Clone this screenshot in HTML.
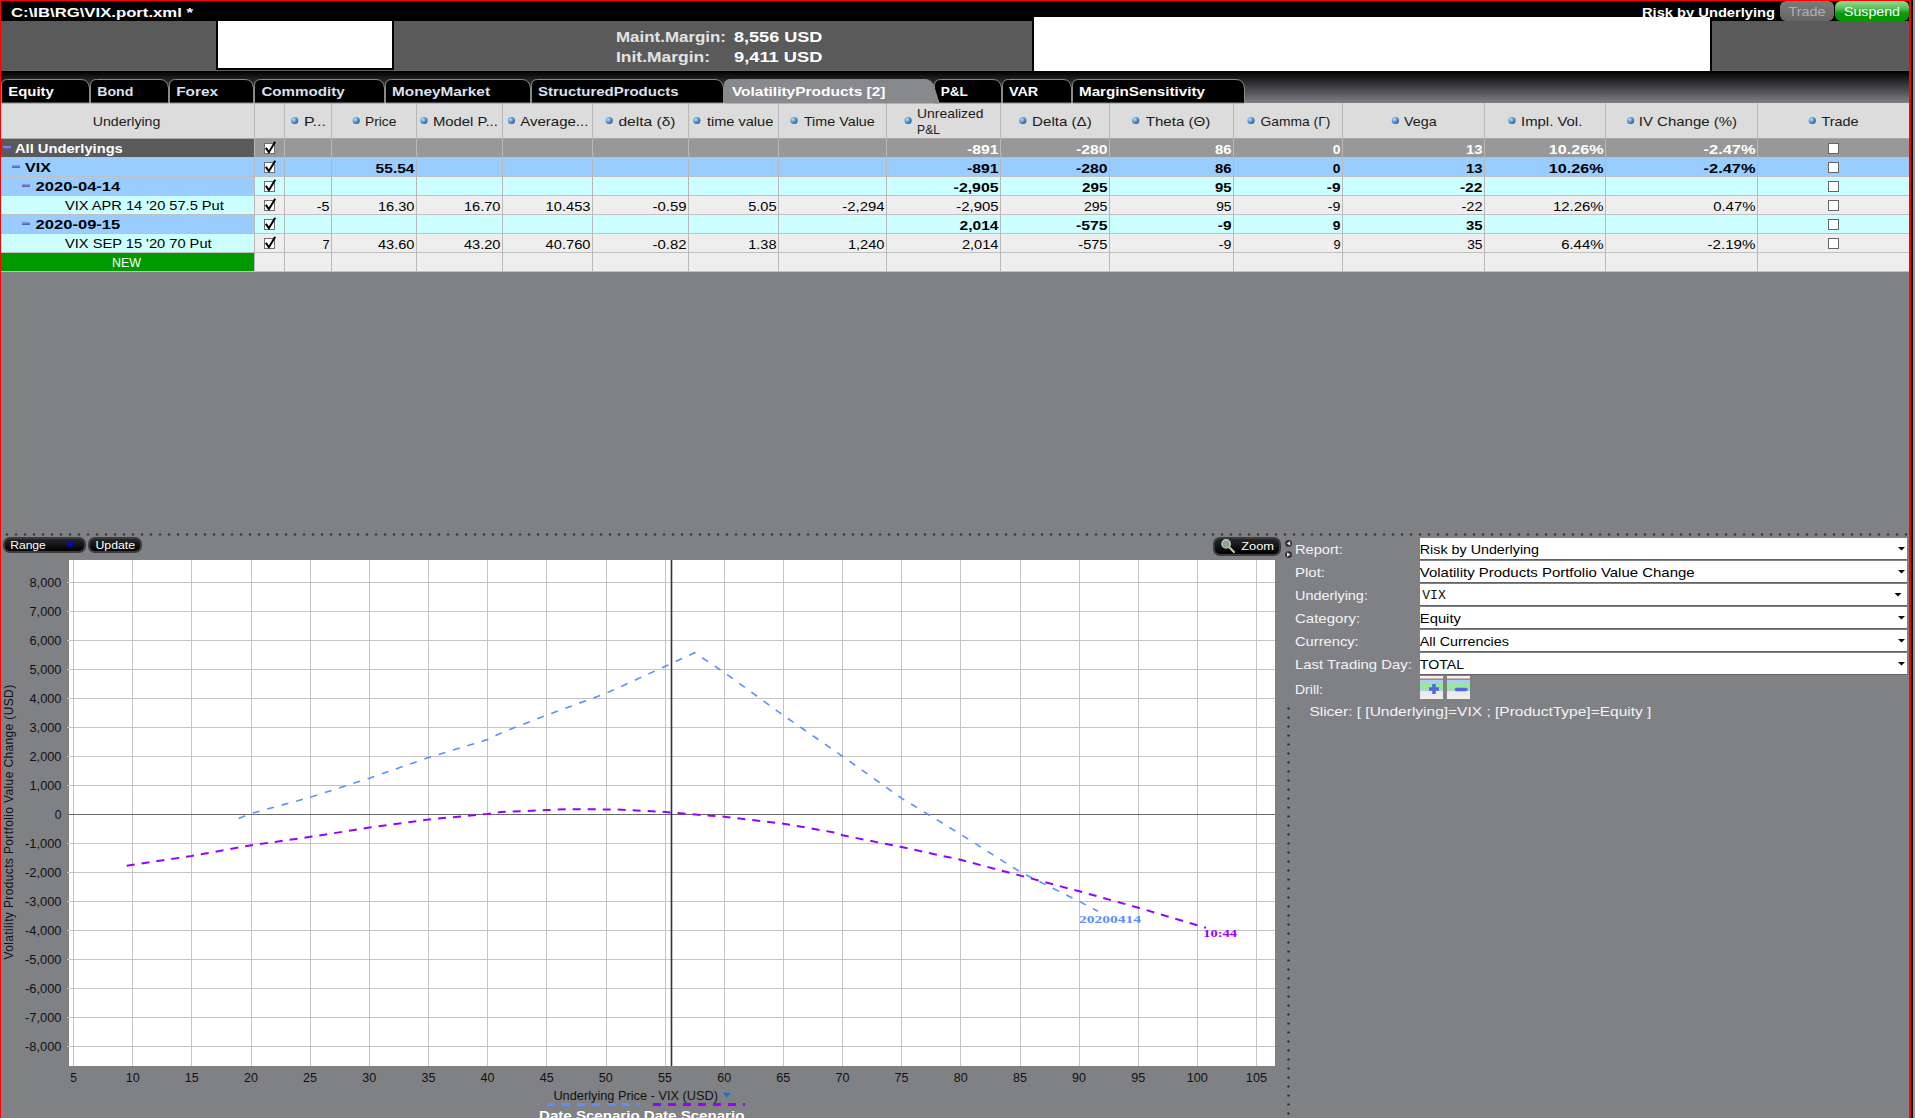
<!DOCTYPE html>
<html><head><meta charset="utf-8"><style>*{margin:0;padding:0;box-sizing:border-box}
html,body{width:1915px;height:1118px;overflow:hidden;background:#808185;font-family:"Liberation Sans",sans-serif}
.a{position:absolute}
svg{position:absolute;left:0;top:0}
</style></head><body>
<div class="a" style="left:0px;top:0px;width:1915px;height:1118px;background:#808185"></div>
<div class="a" style="left:0px;top:0px;width:1915px;height:21px;background:#000"></div>
<div class="a" style="left:0px;top:21px;width:1915px;height:50px;background:#5a5a5a"></div>
<div class="a" style="left:0px;top:70px;width:1915px;height:1px;background:#636363"></div>
<div class="a" style="left:216px;top:21px;width:178px;height:49px;background:#000"></div>
<div class="a" style="left:218px;top:21px;width:174px;height:47px;background:#fff"></div>
<div class="a" style="left:1034px;top:17px;width:676px;height:54px;background:#fff"></div>
<div class="a" style="left:1780px;top:1px;width:54px;height:20px;border-radius:6px;background:linear-gradient(#7a7a7a,#666);"></div>
<div class="a" style="left:1835px;top:1px;width:74px;height:20px;border-radius:6px;background:linear-gradient(#90e090 0%,#5cc05c 35%,#0a9a0a 62%,#009900 100%);"></div>
<div class="a" style="left:0px;top:71px;width:1915px;height:32px;background:linear-gradient(#000 0px,#7e7f83 32px)"></div>
<div class="a" style="left:1032px;top:21px;width:2px;height:50px;background:#000"></div>
<div class="a" style="left:1710px;top:21px;width:2px;height:50px;background:#000"></div>
<div class="a" style="left:1034px;top:17px;width:676px;height:54px;background:#fff"></div>
<div class="a" style="left:1px;top:103px;width:1908px;height:36px;background:#dcdcdc"></div>
<div class="a" style="left:1px;top:138px;width:1908px;height:1px;background:#a8a8a8"></div>
<div class="a" style="left:1px;top:139px;width:253px;height:18px;background:#5a5a5a"></div>
<div class="a" style="left:255px;top:139px;width:1654px;height:18px;background:#989898"></div>
<div class="a" style="left:1px;top:157px;width:1908px;height:1px;background:#c0c0c0"></div>
<div class="a" style="left:3px;top:146px;width:8px;height:3px;background:linear-gradient(#9898ec,#5656c0)"></div>
<div class="a" style="left:1px;top:158px;width:253px;height:18px;background:#99ccff"></div>
<div class="a" style="left:255px;top:158px;width:1654px;height:18px;background:#99ccff"></div>
<div class="a" style="left:1px;top:176px;width:1908px;height:1px;background:#c0c0c0"></div>
<div class="a" style="left:12px;top:165px;width:8px;height:3px;background:linear-gradient(#9898ec,#5656c0)"></div>
<div class="a" style="left:1px;top:177px;width:253px;height:18px;background:#99ccff"></div>
<div class="a" style="left:255px;top:177px;width:1654px;height:18px;background:#ccffff"></div>
<div class="a" style="left:1px;top:195px;width:1908px;height:1px;background:#c0c0c0"></div>
<div class="a" style="left:22px;top:184px;width:8px;height:3px;background:linear-gradient(#9898ec,#5656c0)"></div>
<div class="a" style="left:1px;top:196px;width:253px;height:18px;background:#ccffff"></div>
<div class="a" style="left:255px;top:196px;width:1654px;height:18px;background:#eeeeee"></div>
<div class="a" style="left:1px;top:214px;width:1908px;height:1px;background:#c0c0c0"></div>
<div class="a" style="left:1px;top:215px;width:253px;height:18px;background:#99ccff"></div>
<div class="a" style="left:255px;top:215px;width:1654px;height:18px;background:#ccffff"></div>
<div class="a" style="left:1px;top:233px;width:1908px;height:1px;background:#c0c0c0"></div>
<div class="a" style="left:22px;top:222px;width:8px;height:3px;background:linear-gradient(#9898ec,#5656c0)"></div>
<div class="a" style="left:1px;top:234px;width:253px;height:18px;background:#ccffff"></div>
<div class="a" style="left:255px;top:234px;width:1654px;height:18px;background:#eeeeee"></div>
<div class="a" style="left:1px;top:252px;width:1908px;height:1px;background:#c0c0c0"></div>
<div class="a" style="left:1px;top:253px;width:253px;height:18px;background:#009900"></div>
<div class="a" style="left:255px;top:253px;width:1654px;height:18px;background:#eeeeee"></div>
<div class="a" style="left:1px;top:271px;width:1908px;height:1px;background:#c0c0c0"></div>
<div class="a" style="left:254px;top:103px;width:1px;height:169px;background:#b8b8b8"></div>
<div class="a" style="left:284px;top:103px;width:1px;height:169px;background:#b8b8b8"></div>
<div class="a" style="left:331px;top:103px;width:1px;height:169px;background:#b8b8b8"></div>
<div class="a" style="left:416px;top:103px;width:1px;height:169px;background:#b8b8b8"></div>
<div class="a" style="left:502px;top:103px;width:1px;height:169px;background:#b8b8b8"></div>
<div class="a" style="left:592px;top:103px;width:1px;height:169px;background:#b8b8b8"></div>
<div class="a" style="left:688px;top:103px;width:1px;height:169px;background:#b8b8b8"></div>
<div class="a" style="left:778px;top:103px;width:1px;height:169px;background:#b8b8b8"></div>
<div class="a" style="left:886px;top:103px;width:1px;height:169px;background:#b8b8b8"></div>
<div class="a" style="left:1000px;top:103px;width:1px;height:169px;background:#b8b8b8"></div>
<div class="a" style="left:1109px;top:103px;width:1px;height:169px;background:#b8b8b8"></div>
<div class="a" style="left:1233px;top:103px;width:1px;height:169px;background:#b8b8b8"></div>
<div class="a" style="left:1342px;top:103px;width:1px;height:169px;background:#b8b8b8"></div>
<div class="a" style="left:1484px;top:103px;width:1px;height:169px;background:#b8b8b8"></div>
<div class="a" style="left:1605px;top:103px;width:1px;height:169px;background:#b8b8b8"></div>
<div class="a" style="left:1757px;top:103px;width:1px;height:169px;background:#b8b8b8"></div>
<div class="a" style="left:1px;top:271px;width:1908px;height:1px;background:#c0c0c0"></div>
<div class="a" style="left:3px;top:537px;width:83px;height:16px;border-radius:7px;background:linear-gradient(#262626,#000);border:2px solid #3c3c3c"></div>
<div class="a" style="left:88px;top:537px;width:54px;height:16px;border-radius:7px;background:linear-gradient(#262626,#000);border:2px solid #3c3c3c"></div>
<div class="a" style="left:1213px;top:537px;width:68px;height:19px;border-radius:7px;background:linear-gradient(#262626,#000);border:2px solid #3c3c3c"></div>
<div class="a" style="left:1420px;top:538px;width:487px;height:21px;background:#fff"></div>
<div class="a" style="left:1420px;top:559px;width:487px;height:1px;background:#636363"></div>
<div class="a" style="left:1420px;top:561px;width:487px;height:21px;background:#fff"></div>
<div class="a" style="left:1420px;top:582px;width:487px;height:1px;background:#636363"></div>
<div class="a" style="left:1420px;top:584px;width:487px;height:21px;background:#fff"></div>
<div class="a" style="left:1420px;top:605px;width:487px;height:1px;background:#636363"></div>
<div class="a" style="left:1420px;top:607px;width:487px;height:21px;background:#fff"></div>
<div class="a" style="left:1420px;top:628px;width:487px;height:1px;background:#636363"></div>
<div class="a" style="left:1420px;top:630px;width:487px;height:21px;background:#fff"></div>
<div class="a" style="left:1420px;top:651px;width:487px;height:1px;background:#636363"></div>
<div class="a" style="left:1420px;top:653px;width:487px;height:21px;background:#fff"></div>
<div class="a" style="left:1420px;top:674px;width:487px;height:1px;background:#636363"></div>
<div class="a" style="left:1420px;top:676px;width:23px;height:23px;background:linear-gradient(#f4f0f0 0px,#f4f0f0 2px,#d8b0b0 2px,#d8b0b0 3px,#8090a0 3px,#8090a0 4px,#a8d0ee 4px,#a8d0ee 7px,#98e898 7px,#98e898 13px,#b0d0ea 13px,#b0d0ea 15px,#e8e8e8 15px,#f0f0f0 100%)"></div>
<div class="a" style="left:1447px;top:676px;width:23px;height:23px;background:linear-gradient(#f4f0f0 0px,#f4f0f0 2px,#d8b0b0 2px,#d8b0b0 3px,#8090a0 3px,#8090a0 4px,#a8d0ee 4px,#a8d0ee 7px,#98e898 7px,#98e898 13px,#b0d0ea 13px,#b0d0ea 15px,#e8e8e8 15px,#f0f0f0 100%)"></div>
<svg width="1915" height="1118"><defs><radialGradient id="bul" cx="0.35" cy="0.35" r="0.7"><stop offset="0" stop-color="#bfe0ff"/><stop offset="0.5" stop-color="#5a9ad8"/><stop offset="1" stop-color="#2a5a90"/></radialGradient></defs><path d="M1.5,103 L1.5,85.5 Q1.5,79.5 7.5,79.5 L81,79.5 Q88.5,79.5 89.5,88 L89.5,103 Z" fill="#000" stroke="#8a8a8a" stroke-width="1"/><path d="M90.5,103 L90.5,85.5 Q90.5,79.5 96.5,79.5 L160,79.5 Q167.5,79.5 168.5,88 L168.5,103 Z" fill="#000" stroke="#8a8a8a" stroke-width="1"/><path d="M169.5,103 L169.5,85.5 Q169.5,79.5 175.5,79.5 L245,79.5 Q252.5,79.5 253.5,88 L253.5,103 Z" fill="#000" stroke="#8a8a8a" stroke-width="1"/><path d="M254.5,103 L254.5,85.5 Q254.5,79.5 260.5,79.5 L376,79.5 Q383.5,79.5 384.5,88 L384.5,103 Z" fill="#000" stroke="#8a8a8a" stroke-width="1"/><path d="M385.5,103 L385.5,85.5 Q385.5,79.5 391.5,79.5 L522,79.5 Q529.5,79.5 530.5,88 L530.5,103 Z" fill="#000" stroke="#8a8a8a" stroke-width="1"/><path d="M531.5,103 L531.5,85.5 Q531.5,79.5 537.5,79.5 L715,79.5 Q722.5,79.5 723.5,88 L723.5,103 Z" fill="#000" stroke="#8a8a8a" stroke-width="1"/><path d="M934.5,103 L934.5,85.5 Q934.5,79.5 940.5,79.5 L993,79.5 Q1000.5,79.5 1001.5,88 L1001.5,103 Z" fill="#000" stroke="#8a8a8a" stroke-width="1"/><path d="M1002.5,103 L1002.5,85.5 Q1002.5,79.5 1008.5,79.5 L1063,79.5 Q1070.5,79.5 1071.5,88 L1071.5,103 Z" fill="#000" stroke="#8a8a8a" stroke-width="1"/><path d="M1072.5,103 L1072.5,85.5 Q1072.5,79.5 1078.5,79.5 L1236,79.5 Q1243.5,79.5 1244.5,88 L1244.5,103 Z" fill="#000" stroke="#8a8a8a" stroke-width="1"/><path d="M724.5,103 L724.5,85 Q724.5,79.5 730,79.5 L925,79.5 Q932,79.5 934,87 L939,103 Z" fill="#88898d" stroke="#8a8a8a" stroke-width="1"/><circle cx="294.7" cy="120.5" r="3.6" fill="url(#bul)"/><circle cx="356.2" cy="120.5" r="3.6" fill="url(#bul)"/><circle cx="424.0" cy="120.5" r="3.6" fill="url(#bul)"/><circle cx="511.40000000000003" cy="120.5" r="3.6" fill="url(#bul)"/><circle cx="609.1999999999999" cy="120.5" r="3.6" fill="url(#bul)"/><circle cx="696.8" cy="120.5" r="3.6" fill="url(#bul)"/><circle cx="794.0999999999999" cy="120.5" r="3.6" fill="url(#bul)"/><circle cx="908.0999999999999" cy="120.5" r="3.6" fill="url(#bul)"/><circle cx="1022.8" cy="120.5" r="3.6" fill="url(#bul)"/><circle cx="1135.7" cy="120.5" r="3.6" fill="url(#bul)"/><circle cx="1251.0" cy="120.5" r="3.6" fill="url(#bul)"/><circle cx="1395.3999999999999" cy="120.5" r="3.6" fill="url(#bul)"/><circle cx="1512.0" cy="120.5" r="3.6" fill="url(#bul)"/><circle cx="1630.6" cy="120.5" r="3.6" fill="url(#bul)"/><circle cx="1812.3" cy="120.5" r="3.6" fill="url(#bul)"/><rect x="264.5" y="143.5" width="10" height="10" fill="#fff" stroke="#707070" stroke-width="1"/><path d="M265.8,147.8 L268.9,152.2 L275.2,141.8" fill="none" stroke="#000" stroke-width="2"/><rect x="1828.5" y="143.5" width="10" height="10" fill="#fff" stroke="#666" stroke-width="1"/><rect x="264.5" y="162.5" width="10" height="10" fill="#fff" stroke="#707070" stroke-width="1"/><path d="M265.8,166.8 L268.9,171.2 L275.2,160.8" fill="none" stroke="#000" stroke-width="2"/><rect x="1828.5" y="162.5" width="10" height="10" fill="#fff" stroke="#666" stroke-width="1"/><rect x="264.5" y="181.5" width="10" height="10" fill="#fff" stroke="#707070" stroke-width="1"/><path d="M265.8,185.8 L268.9,190.2 L275.2,179.8" fill="none" stroke="#000" stroke-width="2"/><rect x="1828.5" y="181.5" width="10" height="10" fill="#fff" stroke="#666" stroke-width="1"/><rect x="264.5" y="200.5" width="10" height="10" fill="#fff" stroke="#707070" stroke-width="1"/><path d="M265.8,204.8 L268.9,209.2 L275.2,198.8" fill="none" stroke="#000" stroke-width="2"/><rect x="1828.5" y="200.5" width="10" height="10" fill="#fff" stroke="#666" stroke-width="1"/><rect x="264.5" y="219.5" width="10" height="10" fill="#fff" stroke="#707070" stroke-width="1"/><path d="M265.8,223.8 L268.9,228.2 L275.2,217.8" fill="none" stroke="#000" stroke-width="2"/><rect x="1828.5" y="219.5" width="10" height="10" fill="#fff" stroke="#666" stroke-width="1"/><rect x="264.5" y="238.5" width="10" height="10" fill="#fff" stroke="#707070" stroke-width="1"/><path d="M265.8,242.8 L268.9,247.2 L275.2,236.8" fill="none" stroke="#000" stroke-width="2"/><rect x="1828.5" y="238.5" width="10" height="10" fill="#fff" stroke="#666" stroke-width="1"/><circle cx="7" cy="534.5" r="1.25" fill="#3a3a3a"/><circle cx="16" cy="534.5" r="1.25" fill="#3a3a3a"/><circle cx="25" cy="534.5" r="1.25" fill="#3a3a3a"/><circle cx="34" cy="534.5" r="1.25" fill="#3a3a3a"/><circle cx="43" cy="534.5" r="1.25" fill="#3a3a3a"/><circle cx="52" cy="534.5" r="1.25" fill="#3a3a3a"/><circle cx="61" cy="534.5" r="1.25" fill="#3a3a3a"/><circle cx="70" cy="534.5" r="1.25" fill="#3a3a3a"/><circle cx="79" cy="534.5" r="1.25" fill="#3a3a3a"/><circle cx="88" cy="534.5" r="1.25" fill="#3a3a3a"/><circle cx="97" cy="534.5" r="1.25" fill="#3a3a3a"/><circle cx="106" cy="534.5" r="1.25" fill="#3a3a3a"/><circle cx="115" cy="534.5" r="1.25" fill="#3a3a3a"/><circle cx="124" cy="534.5" r="1.25" fill="#3a3a3a"/><circle cx="133" cy="534.5" r="1.25" fill="#3a3a3a"/><circle cx="142" cy="534.5" r="1.25" fill="#3a3a3a"/><circle cx="151" cy="534.5" r="1.25" fill="#3a3a3a"/><circle cx="160" cy="534.5" r="1.25" fill="#3a3a3a"/><circle cx="169" cy="534.5" r="1.25" fill="#3a3a3a"/><circle cx="178" cy="534.5" r="1.25" fill="#3a3a3a"/><circle cx="187" cy="534.5" r="1.25" fill="#3a3a3a"/><circle cx="196" cy="534.5" r="1.25" fill="#3a3a3a"/><circle cx="205" cy="534.5" r="1.25" fill="#3a3a3a"/><circle cx="214" cy="534.5" r="1.25" fill="#3a3a3a"/><circle cx="223" cy="534.5" r="1.25" fill="#3a3a3a"/><circle cx="232" cy="534.5" r="1.25" fill="#3a3a3a"/><circle cx="241" cy="534.5" r="1.25" fill="#3a3a3a"/><circle cx="250" cy="534.5" r="1.25" fill="#3a3a3a"/><circle cx="259" cy="534.5" r="1.25" fill="#3a3a3a"/><circle cx="268" cy="534.5" r="1.25" fill="#3a3a3a"/><circle cx="277" cy="534.5" r="1.25" fill="#3a3a3a"/><circle cx="286" cy="534.5" r="1.25" fill="#3a3a3a"/><circle cx="295" cy="534.5" r="1.25" fill="#3a3a3a"/><circle cx="304" cy="534.5" r="1.25" fill="#3a3a3a"/><circle cx="313" cy="534.5" r="1.25" fill="#3a3a3a"/><circle cx="322" cy="534.5" r="1.25" fill="#3a3a3a"/><circle cx="331" cy="534.5" r="1.25" fill="#3a3a3a"/><circle cx="340" cy="534.5" r="1.25" fill="#3a3a3a"/><circle cx="349" cy="534.5" r="1.25" fill="#3a3a3a"/><circle cx="358" cy="534.5" r="1.25" fill="#3a3a3a"/><circle cx="367" cy="534.5" r="1.25" fill="#3a3a3a"/><circle cx="376" cy="534.5" r="1.25" fill="#3a3a3a"/><circle cx="385" cy="534.5" r="1.25" fill="#3a3a3a"/><circle cx="394" cy="534.5" r="1.25" fill="#3a3a3a"/><circle cx="403" cy="534.5" r="1.25" fill="#3a3a3a"/><circle cx="412" cy="534.5" r="1.25" fill="#3a3a3a"/><circle cx="421" cy="534.5" r="1.25" fill="#3a3a3a"/><circle cx="430" cy="534.5" r="1.25" fill="#3a3a3a"/><circle cx="439" cy="534.5" r="1.25" fill="#3a3a3a"/><circle cx="448" cy="534.5" r="1.25" fill="#3a3a3a"/><circle cx="457" cy="534.5" r="1.25" fill="#3a3a3a"/><circle cx="466" cy="534.5" r="1.25" fill="#3a3a3a"/><circle cx="475" cy="534.5" r="1.25" fill="#3a3a3a"/><circle cx="484" cy="534.5" r="1.25" fill="#3a3a3a"/><circle cx="493" cy="534.5" r="1.25" fill="#3a3a3a"/><circle cx="502" cy="534.5" r="1.25" fill="#3a3a3a"/><circle cx="511" cy="534.5" r="1.25" fill="#3a3a3a"/><circle cx="520" cy="534.5" r="1.25" fill="#3a3a3a"/><circle cx="529" cy="534.5" r="1.25" fill="#3a3a3a"/><circle cx="538" cy="534.5" r="1.25" fill="#3a3a3a"/><circle cx="547" cy="534.5" r="1.25" fill="#3a3a3a"/><circle cx="556" cy="534.5" r="1.25" fill="#3a3a3a"/><circle cx="565" cy="534.5" r="1.25" fill="#3a3a3a"/><circle cx="574" cy="534.5" r="1.25" fill="#3a3a3a"/><circle cx="583" cy="534.5" r="1.25" fill="#3a3a3a"/><circle cx="592" cy="534.5" r="1.25" fill="#3a3a3a"/><circle cx="601" cy="534.5" r="1.25" fill="#3a3a3a"/><circle cx="610" cy="534.5" r="1.25" fill="#3a3a3a"/><circle cx="619" cy="534.5" r="1.25" fill="#3a3a3a"/><circle cx="628" cy="534.5" r="1.25" fill="#3a3a3a"/><circle cx="637" cy="534.5" r="1.25" fill="#3a3a3a"/><circle cx="646" cy="534.5" r="1.25" fill="#3a3a3a"/><circle cx="655" cy="534.5" r="1.25" fill="#3a3a3a"/><circle cx="664" cy="534.5" r="1.25" fill="#3a3a3a"/><circle cx="673" cy="534.5" r="1.25" fill="#3a3a3a"/><circle cx="682" cy="534.5" r="1.25" fill="#3a3a3a"/><circle cx="691" cy="534.5" r="1.25" fill="#3a3a3a"/><circle cx="700" cy="534.5" r="1.25" fill="#3a3a3a"/><circle cx="709" cy="534.5" r="1.25" fill="#3a3a3a"/><circle cx="718" cy="534.5" r="1.25" fill="#3a3a3a"/><circle cx="727" cy="534.5" r="1.25" fill="#3a3a3a"/><circle cx="736" cy="534.5" r="1.25" fill="#3a3a3a"/><circle cx="745" cy="534.5" r="1.25" fill="#3a3a3a"/><circle cx="754" cy="534.5" r="1.25" fill="#3a3a3a"/><circle cx="763" cy="534.5" r="1.25" fill="#3a3a3a"/><circle cx="772" cy="534.5" r="1.25" fill="#3a3a3a"/><circle cx="781" cy="534.5" r="1.25" fill="#3a3a3a"/><circle cx="790" cy="534.5" r="1.25" fill="#3a3a3a"/><circle cx="799" cy="534.5" r="1.25" fill="#3a3a3a"/><circle cx="808" cy="534.5" r="1.25" fill="#3a3a3a"/><circle cx="817" cy="534.5" r="1.25" fill="#3a3a3a"/><circle cx="826" cy="534.5" r="1.25" fill="#3a3a3a"/><circle cx="835" cy="534.5" r="1.25" fill="#3a3a3a"/><circle cx="844" cy="534.5" r="1.25" fill="#3a3a3a"/><circle cx="853" cy="534.5" r="1.25" fill="#3a3a3a"/><circle cx="862" cy="534.5" r="1.25" fill="#3a3a3a"/><circle cx="871" cy="534.5" r="1.25" fill="#3a3a3a"/><circle cx="880" cy="534.5" r="1.25" fill="#3a3a3a"/><circle cx="889" cy="534.5" r="1.25" fill="#3a3a3a"/><circle cx="898" cy="534.5" r="1.25" fill="#3a3a3a"/><circle cx="907" cy="534.5" r="1.25" fill="#3a3a3a"/><circle cx="916" cy="534.5" r="1.25" fill="#3a3a3a"/><circle cx="925" cy="534.5" r="1.25" fill="#3a3a3a"/><circle cx="934" cy="534.5" r="1.25" fill="#3a3a3a"/><circle cx="943" cy="534.5" r="1.25" fill="#3a3a3a"/><circle cx="952" cy="534.5" r="1.25" fill="#3a3a3a"/><circle cx="961" cy="534.5" r="1.25" fill="#3a3a3a"/><circle cx="970" cy="534.5" r="1.25" fill="#3a3a3a"/><circle cx="979" cy="534.5" r="1.25" fill="#3a3a3a"/><circle cx="988" cy="534.5" r="1.25" fill="#3a3a3a"/><circle cx="997" cy="534.5" r="1.25" fill="#3a3a3a"/><circle cx="1006" cy="534.5" r="1.25" fill="#3a3a3a"/><circle cx="1015" cy="534.5" r="1.25" fill="#3a3a3a"/><circle cx="1024" cy="534.5" r="1.25" fill="#3a3a3a"/><circle cx="1033" cy="534.5" r="1.25" fill="#3a3a3a"/><circle cx="1042" cy="534.5" r="1.25" fill="#3a3a3a"/><circle cx="1051" cy="534.5" r="1.25" fill="#3a3a3a"/><circle cx="1060" cy="534.5" r="1.25" fill="#3a3a3a"/><circle cx="1069" cy="534.5" r="1.25" fill="#3a3a3a"/><circle cx="1078" cy="534.5" r="1.25" fill="#3a3a3a"/><circle cx="1087" cy="534.5" r="1.25" fill="#3a3a3a"/><circle cx="1096" cy="534.5" r="1.25" fill="#3a3a3a"/><circle cx="1105" cy="534.5" r="1.25" fill="#3a3a3a"/><circle cx="1114" cy="534.5" r="1.25" fill="#3a3a3a"/><circle cx="1123" cy="534.5" r="1.25" fill="#3a3a3a"/><circle cx="1132" cy="534.5" r="1.25" fill="#3a3a3a"/><circle cx="1141" cy="534.5" r="1.25" fill="#3a3a3a"/><circle cx="1150" cy="534.5" r="1.25" fill="#3a3a3a"/><circle cx="1159" cy="534.5" r="1.25" fill="#3a3a3a"/><circle cx="1168" cy="534.5" r="1.25" fill="#3a3a3a"/><circle cx="1177" cy="534.5" r="1.25" fill="#3a3a3a"/><circle cx="1186" cy="534.5" r="1.25" fill="#3a3a3a"/><circle cx="1195" cy="534.5" r="1.25" fill="#3a3a3a"/><circle cx="1204" cy="534.5" r="1.25" fill="#3a3a3a"/><circle cx="1213" cy="534.5" r="1.25" fill="#3a3a3a"/><circle cx="1222" cy="534.5" r="1.25" fill="#3a3a3a"/><circle cx="1231" cy="534.5" r="1.25" fill="#3a3a3a"/><circle cx="1240" cy="534.5" r="1.25" fill="#3a3a3a"/><circle cx="1249" cy="534.5" r="1.25" fill="#3a3a3a"/><circle cx="1258" cy="534.5" r="1.25" fill="#3a3a3a"/><circle cx="1267" cy="534.5" r="1.25" fill="#3a3a3a"/><circle cx="1276" cy="534.5" r="1.25" fill="#3a3a3a"/><circle cx="1285" cy="534.5" r="1.25" fill="#3a3a3a"/><circle cx="1294" cy="534.5" r="1.25" fill="#3a3a3a"/><circle cx="1303" cy="534.5" r="1.25" fill="#3a3a3a"/><circle cx="1312" cy="534.5" r="1.25" fill="#3a3a3a"/><circle cx="1321" cy="534.5" r="1.25" fill="#3a3a3a"/><circle cx="1330" cy="534.5" r="1.25" fill="#3a3a3a"/><circle cx="1339" cy="534.5" r="1.25" fill="#3a3a3a"/><circle cx="1348" cy="534.5" r="1.25" fill="#3a3a3a"/><circle cx="1357" cy="534.5" r="1.25" fill="#3a3a3a"/><circle cx="1366" cy="534.5" r="1.25" fill="#3a3a3a"/><circle cx="1375" cy="534.5" r="1.25" fill="#3a3a3a"/><circle cx="1384" cy="534.5" r="1.25" fill="#3a3a3a"/><circle cx="1393" cy="534.5" r="1.25" fill="#3a3a3a"/><circle cx="1402" cy="534.5" r="1.25" fill="#3a3a3a"/><circle cx="1411" cy="534.5" r="1.25" fill="#3a3a3a"/><circle cx="1420" cy="534.5" r="1.25" fill="#3a3a3a"/><circle cx="1429" cy="534.5" r="1.25" fill="#3a3a3a"/><circle cx="1438" cy="534.5" r="1.25" fill="#3a3a3a"/><circle cx="1447" cy="534.5" r="1.25" fill="#3a3a3a"/><circle cx="1456" cy="534.5" r="1.25" fill="#3a3a3a"/><circle cx="1465" cy="534.5" r="1.25" fill="#3a3a3a"/><circle cx="1474" cy="534.5" r="1.25" fill="#3a3a3a"/><circle cx="1483" cy="534.5" r="1.25" fill="#3a3a3a"/><circle cx="1492" cy="534.5" r="1.25" fill="#3a3a3a"/><circle cx="1501" cy="534.5" r="1.25" fill="#3a3a3a"/><circle cx="1510" cy="534.5" r="1.25" fill="#3a3a3a"/><circle cx="1519" cy="534.5" r="1.25" fill="#3a3a3a"/><circle cx="1528" cy="534.5" r="1.25" fill="#3a3a3a"/><circle cx="1537" cy="534.5" r="1.25" fill="#3a3a3a"/><circle cx="1546" cy="534.5" r="1.25" fill="#3a3a3a"/><circle cx="1555" cy="534.5" r="1.25" fill="#3a3a3a"/><circle cx="1564" cy="534.5" r="1.25" fill="#3a3a3a"/><circle cx="1573" cy="534.5" r="1.25" fill="#3a3a3a"/><circle cx="1582" cy="534.5" r="1.25" fill="#3a3a3a"/><circle cx="1591" cy="534.5" r="1.25" fill="#3a3a3a"/><circle cx="1600" cy="534.5" r="1.25" fill="#3a3a3a"/><circle cx="1609" cy="534.5" r="1.25" fill="#3a3a3a"/><circle cx="1618" cy="534.5" r="1.25" fill="#3a3a3a"/><circle cx="1627" cy="534.5" r="1.25" fill="#3a3a3a"/><circle cx="1636" cy="534.5" r="1.25" fill="#3a3a3a"/><circle cx="1645" cy="534.5" r="1.25" fill="#3a3a3a"/><circle cx="1654" cy="534.5" r="1.25" fill="#3a3a3a"/><circle cx="1663" cy="534.5" r="1.25" fill="#3a3a3a"/><circle cx="1672" cy="534.5" r="1.25" fill="#3a3a3a"/><circle cx="1681" cy="534.5" r="1.25" fill="#3a3a3a"/><circle cx="1690" cy="534.5" r="1.25" fill="#3a3a3a"/><circle cx="1699" cy="534.5" r="1.25" fill="#3a3a3a"/><circle cx="1708" cy="534.5" r="1.25" fill="#3a3a3a"/><circle cx="1717" cy="534.5" r="1.25" fill="#3a3a3a"/><circle cx="1726" cy="534.5" r="1.25" fill="#3a3a3a"/><circle cx="1735" cy="534.5" r="1.25" fill="#3a3a3a"/><circle cx="1744" cy="534.5" r="1.25" fill="#3a3a3a"/><circle cx="1753" cy="534.5" r="1.25" fill="#3a3a3a"/><circle cx="1762" cy="534.5" r="1.25" fill="#3a3a3a"/><circle cx="1771" cy="534.5" r="1.25" fill="#3a3a3a"/><circle cx="1780" cy="534.5" r="1.25" fill="#3a3a3a"/><circle cx="1789" cy="534.5" r="1.25" fill="#3a3a3a"/><circle cx="1798" cy="534.5" r="1.25" fill="#3a3a3a"/><circle cx="1807" cy="534.5" r="1.25" fill="#3a3a3a"/><circle cx="1816" cy="534.5" r="1.25" fill="#3a3a3a"/><circle cx="1825" cy="534.5" r="1.25" fill="#3a3a3a"/><circle cx="1834" cy="534.5" r="1.25" fill="#3a3a3a"/><circle cx="1843" cy="534.5" r="1.25" fill="#3a3a3a"/><circle cx="1852" cy="534.5" r="1.25" fill="#3a3a3a"/><circle cx="1861" cy="534.5" r="1.25" fill="#3a3a3a"/><circle cx="1870" cy="534.5" r="1.25" fill="#3a3a3a"/><circle cx="1879" cy="534.5" r="1.25" fill="#3a3a3a"/><circle cx="1888" cy="534.5" r="1.25" fill="#3a3a3a"/><circle cx="1897" cy="534.5" r="1.25" fill="#3a3a3a"/><circle cx="1906" cy="534.5" r="1.25" fill="#3a3a3a"/><path d="M66.6,542.2 L74.2,542.2 L70.4,548.1 Z" fill="#0000ff"/><line x1="1229" y1="547" x2="1234" y2="552" stroke="#d8c0a0" stroke-width="2.2" stroke-linecap="round"/><circle cx="1226.1" cy="543.9" r="4.2" fill="#8aa88a" stroke="#b8c4c8" stroke-width="1.4"/><rect x="69" y="560" width="1206" height="506" fill="#fff"/><line x1="73.5" y1="560" x2="73.5" y2="1066" stroke="#c4c4c4" stroke-width="1"/><line x1="132.5" y1="560" x2="132.5" y2="1066" stroke="#c4c4c4" stroke-width="1"/><line x1="191.5" y1="560" x2="191.5" y2="1066" stroke="#c4c4c4" stroke-width="1"/><line x1="251.5" y1="560" x2="251.5" y2="1066" stroke="#c4c4c4" stroke-width="1"/><line x1="310.5" y1="560" x2="310.5" y2="1066" stroke="#c4c4c4" stroke-width="1"/><line x1="369.5" y1="560" x2="369.5" y2="1066" stroke="#c4c4c4" stroke-width="1"/><line x1="428.5" y1="560" x2="428.5" y2="1066" stroke="#c4c4c4" stroke-width="1"/><line x1="487.5" y1="560" x2="487.5" y2="1066" stroke="#c4c4c4" stroke-width="1"/><line x1="546.5" y1="560" x2="546.5" y2="1066" stroke="#c4c4c4" stroke-width="1"/><line x1="606.5" y1="560" x2="606.5" y2="1066" stroke="#c4c4c4" stroke-width="1"/><line x1="665.5" y1="560" x2="665.5" y2="1066" stroke="#c4c4c4" stroke-width="1"/><line x1="724.5" y1="560" x2="724.5" y2="1066" stroke="#c4c4c4" stroke-width="1"/><line x1="783.5" y1="560" x2="783.5" y2="1066" stroke="#c4c4c4" stroke-width="1"/><line x1="842.5" y1="560" x2="842.5" y2="1066" stroke="#c4c4c4" stroke-width="1"/><line x1="901.5" y1="560" x2="901.5" y2="1066" stroke="#c4c4c4" stroke-width="1"/><line x1="960.5" y1="560" x2="960.5" y2="1066" stroke="#c4c4c4" stroke-width="1"/><line x1="1020.5" y1="560" x2="1020.5" y2="1066" stroke="#c4c4c4" stroke-width="1"/><line x1="1079.5" y1="560" x2="1079.5" y2="1066" stroke="#c4c4c4" stroke-width="1"/><line x1="1138.5" y1="560" x2="1138.5" y2="1066" stroke="#c4c4c4" stroke-width="1"/><line x1="1197.5" y1="560" x2="1197.5" y2="1066" stroke="#c4c4c4" stroke-width="1"/><line x1="1256.5" y1="560" x2="1256.5" y2="1066" stroke="#c4c4c4" stroke-width="1"/><line x1="67" y1="1046.5" x2="1275" y2="1046.5" stroke="#c4c4c4" stroke-width="1"/><line x1="67" y1="1017.5" x2="1275" y2="1017.5" stroke="#c4c4c4" stroke-width="1"/><line x1="67" y1="988.5" x2="1275" y2="988.5" stroke="#c4c4c4" stroke-width="1"/><line x1="67" y1="959.5" x2="1275" y2="959.5" stroke="#c4c4c4" stroke-width="1"/><line x1="67" y1="930.5" x2="1275" y2="930.5" stroke="#c4c4c4" stroke-width="1"/><line x1="67" y1="901.5" x2="1275" y2="901.5" stroke="#c4c4c4" stroke-width="1"/><line x1="67" y1="872.5" x2="1275" y2="872.5" stroke="#c4c4c4" stroke-width="1"/><line x1="67" y1="843.5" x2="1275" y2="843.5" stroke="#c4c4c4" stroke-width="1"/><line x1="67" y1="814.5" x2="1275" y2="814.5" stroke="#6a6a6a" stroke-width="1"/><line x1="67" y1="785.5" x2="1275" y2="785.5" stroke="#c4c4c4" stroke-width="1"/><line x1="67" y1="756.5" x2="1275" y2="756.5" stroke="#c4c4c4" stroke-width="1"/><line x1="67" y1="727.5" x2="1275" y2="727.5" stroke="#c4c4c4" stroke-width="1"/><line x1="67" y1="698.5" x2="1275" y2="698.5" stroke="#c4c4c4" stroke-width="1"/><line x1="67" y1="669.5" x2="1275" y2="669.5" stroke="#c4c4c4" stroke-width="1"/><line x1="67" y1="640.5" x2="1275" y2="640.5" stroke="#c4c4c4" stroke-width="1"/><line x1="67" y1="611.5" x2="1275" y2="611.5" stroke="#c4c4c4" stroke-width="1"/><line x1="67" y1="582.5" x2="1275" y2="582.5" stroke="#c4c4c4" stroke-width="1"/><line x1="671.5" y1="560" x2="671.5" y2="1066" stroke="#333" stroke-width="1.6"/><polyline points="238.7,818.4 251.5,813.4 310.5,797.2 369.4,778.2 428.6,757.5 487.5,739.6 502.9,732.1 546.5,715.2 605.3,693.6 665.5,666.3 694.6,652.7 724.4,672.6 783.7,715.6 842.6,756.3 901.4,798.1 960.5,834.2 1020.3,872.0 1079.4,901.5 1097.9,911.2" fill="none" stroke="#5b8fff" stroke-width="1.6" stroke-dasharray="7,8"/><polyline points="126.7,865.7 191.6,856 251.5,845.2 310.5,836.8 369.5,827.6 428.6,819.5 487.5,813.9 501,812 546.5,810.1 566.8,809.2 605.3,809.4 617.6,809.6 665.5,812 698.4,814.8 724.4,816.7 783.7,823.7 834.9,832.6 842.6,835.3 901.4,847 960.5,859.8 1020.3,875.6 1079.4,891.3 1138.3,907.7 1206,927.8" fill="none" stroke="#9900ff" stroke-width="2" stroke-dasharray="8,7"/><path d="M722.8,1092.8 L730.8,1092.8 L726.8,1097.5 Z" fill="#1a6fd0"/><line x1="547" y1="1104.5" x2="640" y2="1104.5" stroke="#5b8fff" stroke-width="3" stroke-dasharray="8,7"/><line x1="653" y1="1104.5" x2="745" y2="1104.5" stroke="#9900ff" stroke-width="3" stroke-dasharray="8,7"/><circle cx="1288.5" cy="708.5" r="1.2" fill="#333"/><circle cx="1288.5" cy="717.5" r="1.2" fill="#333"/><circle cx="1288.5" cy="726.5" r="1.2" fill="#333"/><circle cx="1288.5" cy="735.5" r="1.2" fill="#333"/><circle cx="1288.5" cy="744.5" r="1.2" fill="#333"/><circle cx="1288.5" cy="753.5" r="1.2" fill="#333"/><circle cx="1288.5" cy="762.5" r="1.2" fill="#333"/><circle cx="1288.5" cy="771.5" r="1.2" fill="#333"/><circle cx="1288.5" cy="780.5" r="1.2" fill="#333"/><circle cx="1288.5" cy="789.5" r="1.2" fill="#333"/><circle cx="1288.5" cy="798.5" r="1.2" fill="#333"/><circle cx="1288.5" cy="807.5" r="1.2" fill="#333"/><circle cx="1288.5" cy="816.5" r="1.2" fill="#333"/><circle cx="1288.5" cy="825.5" r="1.2" fill="#333"/><circle cx="1288.5" cy="834.5" r="1.2" fill="#333"/><circle cx="1288.5" cy="843.5" r="1.2" fill="#333"/><circle cx="1288.5" cy="852.5" r="1.2" fill="#333"/><circle cx="1288.5" cy="861.5" r="1.2" fill="#333"/><circle cx="1288.5" cy="870.5" r="1.2" fill="#333"/><circle cx="1288.5" cy="879.5" r="1.2" fill="#333"/><circle cx="1288.5" cy="888.5" r="1.2" fill="#333"/><circle cx="1288.5" cy="897.5" r="1.2" fill="#333"/><circle cx="1288.5" cy="906.5" r="1.2" fill="#333"/><circle cx="1288.5" cy="915.5" r="1.2" fill="#333"/><circle cx="1288.5" cy="924.5" r="1.2" fill="#333"/><circle cx="1288.5" cy="933.5" r="1.2" fill="#333"/><circle cx="1288.5" cy="942.5" r="1.2" fill="#333"/><circle cx="1288.5" cy="951.5" r="1.2" fill="#333"/><circle cx="1288.5" cy="960.5" r="1.2" fill="#333"/><circle cx="1288.5" cy="969.5" r="1.2" fill="#333"/><circle cx="1288.5" cy="978.5" r="1.2" fill="#333"/><circle cx="1288.5" cy="987.5" r="1.2" fill="#333"/><circle cx="1288.5" cy="996.5" r="1.2" fill="#333"/><circle cx="1288.5" cy="1005.5" r="1.2" fill="#333"/><circle cx="1288.5" cy="1014.5" r="1.2" fill="#333"/><circle cx="1288.5" cy="1023.5" r="1.2" fill="#333"/><circle cx="1288.5" cy="1032.5" r="1.2" fill="#333"/><circle cx="1288.5" cy="1041.5" r="1.2" fill="#333"/><circle cx="1288.5" cy="1050.5" r="1.2" fill="#333"/><circle cx="1288.5" cy="1059.5" r="1.2" fill="#333"/><circle cx="1288.5" cy="1068.5" r="1.2" fill="#333"/><circle cx="1288.5" cy="1077.5" r="1.2" fill="#333"/><circle cx="1288.5" cy="1086.5" r="1.2" fill="#333"/><circle cx="1288.5" cy="1095.5" r="1.2" fill="#333"/><circle cx="1288.5" cy="1104.5" r="1.2" fill="#333"/><circle cx="1288.5" cy="1113.5" r="1.2" fill="#333"/><path d="M1898.0,547 L1905.0,547 L1901.5,550.5 Z" fill="#000"/><path d="M1898.0,570 L1905.0,570 L1901.5,573.5 Z" fill="#000"/><path d="M1894.5,593 L1901.5,593 L1898,596.5 Z" fill="#000"/><path d="M1898.0,616 L1905.0,616 L1901.5,619.5 Z" fill="#000"/><path d="M1898.0,639 L1905.0,639 L1901.5,642.5 Z" fill="#000"/><path d="M1898.0,662 L1905.0,662 L1901.5,665.5 Z" fill="#000"/><path d="M1429,689 h10 M1434,684 v10" stroke="#5566dd" stroke-width="3.5"/><path d="M1456.5,689.5 h9.5" stroke="#5566dd" stroke-width="3.5" stroke-linecap="round"/><circle cx="1288.6" cy="543.4" r="3.4" fill="#2e2e2e"/><path d="M1290.2,541.2 L1286.8,543.4 L1290.2,545.6Z" fill="#eee"/><circle cx="1288.6" cy="554.6" r="3.4" fill="#2e2e2e"/><path d="M1287,552.4 L1290.4,554.6 L1287,556.8Z" fill="#eee"/><text x="11.00" y="17" font-family="Liberation Sans" font-size="13" font-weight="bold" fill="#fff" textLength="182.00" lengthAdjust="spacingAndGlyphs">C:\IB\RG\VIX.port.xml *</text>
<text x="1642.00" y="17" font-family="Liberation Sans" font-size="13" font-weight="bold" fill="#fff" textLength="133.00" lengthAdjust="spacingAndGlyphs">Risk by Underlying</text>
<text x="616.00" y="42" font-family="Liberation Sans" font-size="15.2" font-weight="bold" fill="#e4e4e4" textLength="110.00" lengthAdjust="spacingAndGlyphs">Maint.Margin:</text>
<text x="616.00" y="62" font-family="Liberation Sans" font-size="15.2" font-weight="bold" fill="#e4e4e4" textLength="94.00" lengthAdjust="spacingAndGlyphs">Init.Margin:</text>
<text x="734.00" y="42" font-family="Liberation Sans" font-size="15.2" font-weight="bold" fill="#fff" textLength="88.40" lengthAdjust="spacingAndGlyphs">8,556 USD</text>
<text x="734.00" y="62" font-family="Liberation Sans" font-size="15.2" font-weight="bold" fill="#fff" textLength="88.40" lengthAdjust="spacingAndGlyphs">9,411 USD</text>
<text x="1788.50" y="16" font-family="Liberation Sans" font-size="13" fill="#b0b0b0" textLength="37.00" lengthAdjust="spacingAndGlyphs">Trade</text>
<text x="1844.00" y="16" font-family="Liberation Sans" font-size="13" fill="#fff" textLength="56.00" lengthAdjust="spacingAndGlyphs">Suspend</text>
<text x="8.30" y="96" font-family="Liberation Sans" font-size="13" font-weight="bold" fill="#fff" textLength="45.60" lengthAdjust="spacingAndGlyphs">Equity</text>
<text x="97.20" y="96" font-family="Liberation Sans" font-size="13" font-weight="bold" fill="#dde0ee" textLength="36.10" lengthAdjust="spacingAndGlyphs">Bond</text>
<text x="176.20" y="96" font-family="Liberation Sans" font-size="13" font-weight="bold" fill="#dde0ee" textLength="41.80" lengthAdjust="spacingAndGlyphs">Forex</text>
<text x="261.40" y="96" font-family="Liberation Sans" font-size="13" font-weight="bold" fill="#dde0ee" textLength="83.20" lengthAdjust="spacingAndGlyphs">Commodity</text>
<text x="392.00" y="96" font-family="Liberation Sans" font-size="13" font-weight="bold" fill="#dde0ee" textLength="98.00" lengthAdjust="spacingAndGlyphs">MoneyMarket</text>
<text x="538.10" y="96" font-family="Liberation Sans" font-size="13" font-weight="bold" fill="#dde0ee" textLength="140.40" lengthAdjust="spacingAndGlyphs">StructuredProducts</text>
<text x="940.80" y="96" font-family="Liberation Sans" font-size="13" font-weight="bold" fill="#fff" textLength="27.10" lengthAdjust="spacingAndGlyphs">P&amp;L</text>
<text x="1008.90" y="96" font-family="Liberation Sans" font-size="13" font-weight="bold" fill="#fff" textLength="29.30" lengthAdjust="spacingAndGlyphs">VAR</text>
<text x="1079.00" y="96" font-family="Liberation Sans" font-size="13" font-weight="bold" fill="#fff" textLength="125.90" lengthAdjust="spacingAndGlyphs">MarginSensitivity</text>
<text x="731.90" y="96" font-family="Liberation Sans" font-size="13" font-weight="bold" fill="#fff" textLength="153.60" lengthAdjust="spacingAndGlyphs">VolatilityProducts [2]</text>
<text x="92.70" y="126" font-family="Liberation Sans" font-size="13" fill="#1a1a1a" textLength="67.70" lengthAdjust="spacingAndGlyphs">Underlying</text>
<text x="304.00" y="126" font-family="Liberation Sans" font-size="13" fill="#1a1a1a" textLength="21.90" lengthAdjust="spacingAndGlyphs">P...</text>
<text x="365.00" y="126" font-family="Liberation Sans" font-size="13" fill="#1a1a1a" textLength="31.40" lengthAdjust="spacingAndGlyphs">Price</text>
<text x="432.90" y="126" font-family="Liberation Sans" font-size="13" fill="#1a1a1a" textLength="65.00" lengthAdjust="spacingAndGlyphs">Model P...</text>
<text x="520.20" y="126" font-family="Liberation Sans" font-size="13" fill="#1a1a1a" textLength="68.20" lengthAdjust="spacingAndGlyphs">Average...</text>
<text x="618.40" y="126" font-family="Liberation Sans" font-size="13" fill="#1a1a1a" textLength="57.10" lengthAdjust="spacingAndGlyphs">delta (δ)</text>
<text x="706.90" y="126" font-family="Liberation Sans" font-size="13" fill="#1a1a1a" textLength="66.40" lengthAdjust="spacingAndGlyphs">time value</text>
<text x="803.90" y="126" font-family="Liberation Sans" font-size="13" fill="#1a1a1a" textLength="70.90" lengthAdjust="spacingAndGlyphs">Time Value</text>
<text x="917.10" y="117.5" font-family="Liberation Sans" font-size="13" fill="#1a1a1a" textLength="66.40" lengthAdjust="spacingAndGlyphs">Unrealized</text>
<text x="917.10" y="134" font-family="Liberation Sans" font-size="13" fill="#1a1a1a" textLength="23.00" lengthAdjust="spacingAndGlyphs">P&amp;L</text>
<text x="1032.10" y="126" font-family="Liberation Sans" font-size="13" fill="#1a1a1a" textLength="59.60" lengthAdjust="spacingAndGlyphs">Delta (Δ)</text>
<text x="1145.70" y="126" font-family="Liberation Sans" font-size="13" fill="#1a1a1a" textLength="64.60" lengthAdjust="spacingAndGlyphs">Theta (Θ)</text>
<text x="1260.50" y="126" font-family="Liberation Sans" font-size="13" fill="#1a1a1a" textLength="69.90" lengthAdjust="spacingAndGlyphs">Gamma (Γ)</text>
<text x="1404.00" y="126" font-family="Liberation Sans" font-size="13" fill="#1a1a1a" textLength="32.70" lengthAdjust="spacingAndGlyphs">Vega</text>
<text x="1521.00" y="126" font-family="Liberation Sans" font-size="13" fill="#1a1a1a" textLength="61.30" lengthAdjust="spacingAndGlyphs">Impl. Vol.</text>
<text x="1638.80" y="126" font-family="Liberation Sans" font-size="13" fill="#1a1a1a" textLength="98.20" lengthAdjust="spacingAndGlyphs">IV Change (%)</text>
<text x="1821.40" y="126" font-family="Liberation Sans" font-size="13" fill="#1a1a1a" textLength="37.20" lengthAdjust="spacingAndGlyphs">Trade</text>
<text x="15.00" y="153" font-family="Liberation Sans" font-size="12.5" font-weight="bold" fill="#fff" textLength="107.80" lengthAdjust="spacingAndGlyphs">All Underlyings</text>
<text x="967.04" y="153.7" font-family="Liberation Sans" font-size="12.5" font-weight="bold" fill="#fff" textLength="31.46" lengthAdjust="spacingAndGlyphs">-891</text>
<text x="1076.04" y="153.7" font-family="Liberation Sans" font-size="12.5" font-weight="bold" fill="#fff" textLength="31.46" lengthAdjust="spacingAndGlyphs">-280</text>
<text x="1214.92" y="153.7" font-family="Liberation Sans" font-size="12.5" font-weight="bold" fill="#fff" textLength="16.57" lengthAdjust="spacingAndGlyphs">86</text>
<text x="1332.81" y="153.7" font-family="Liberation Sans" font-size="12.5" font-weight="bold" fill="#fff" textLength="7.69" lengthAdjust="spacingAndGlyphs">0</text>
<text x="1465.92" y="153.7" font-family="Liberation Sans" font-size="12.5" font-weight="bold" fill="#fff" textLength="16.57" lengthAdjust="spacingAndGlyphs">13</text>
<text x="1548.74" y="153.7" font-family="Liberation Sans" font-size="12.5" font-weight="bold" fill="#fff" textLength="54.76" lengthAdjust="spacingAndGlyphs">10.26%</text>
<text x="1703.62" y="153.7" font-family="Liberation Sans" font-size="12.5" font-weight="bold" fill="#fff" textLength="51.87" lengthAdjust="spacingAndGlyphs">-2.47%</text>
<text x="25.00" y="172" font-family="Liberation Sans" font-size="12.5" font-weight="bold" fill="#000" textLength="25.90" lengthAdjust="spacingAndGlyphs">VIX</text>
<text x="375.64" y="172.7" font-family="Liberation Sans" font-size="12.5" font-weight="bold" fill="#000" textLength="38.86" lengthAdjust="spacingAndGlyphs">55.54</text>
<text x="967.04" y="172.7" font-family="Liberation Sans" font-size="12.5" font-weight="bold" fill="#000" textLength="31.46" lengthAdjust="spacingAndGlyphs">-891</text>
<text x="1076.04" y="172.7" font-family="Liberation Sans" font-size="12.5" font-weight="bold" fill="#000" textLength="31.46" lengthAdjust="spacingAndGlyphs">-280</text>
<text x="1214.92" y="172.7" font-family="Liberation Sans" font-size="12.5" font-weight="bold" fill="#000" textLength="16.57" lengthAdjust="spacingAndGlyphs">86</text>
<text x="1332.81" y="172.7" font-family="Liberation Sans" font-size="12.5" font-weight="bold" fill="#000" textLength="7.69" lengthAdjust="spacingAndGlyphs">0</text>
<text x="1465.92" y="172.7" font-family="Liberation Sans" font-size="12.5" font-weight="bold" fill="#000" textLength="16.57" lengthAdjust="spacingAndGlyphs">13</text>
<text x="1548.74" y="172.7" font-family="Liberation Sans" font-size="12.5" font-weight="bold" fill="#000" textLength="54.76" lengthAdjust="spacingAndGlyphs">10.26%</text>
<text x="1703.62" y="172.7" font-family="Liberation Sans" font-size="12.5" font-weight="bold" fill="#000" textLength="51.87" lengthAdjust="spacingAndGlyphs">-2.47%</text>
<text x="35.60" y="191" font-family="Liberation Sans" font-size="12.5" font-weight="bold" fill="#000" textLength="84.70" lengthAdjust="spacingAndGlyphs">2020-04-14</text>
<text x="953.64" y="191.7" font-family="Liberation Sans" font-size="12.5" font-weight="bold" fill="#000" textLength="44.86" lengthAdjust="spacingAndGlyphs">-2,905</text>
<text x="1082.04" y="191.7" font-family="Liberation Sans" font-size="12.5" font-weight="bold" fill="#000" textLength="25.46" lengthAdjust="spacingAndGlyphs">295</text>
<text x="1214.92" y="191.7" font-family="Liberation Sans" font-size="12.5" font-weight="bold" fill="#000" textLength="16.57" lengthAdjust="spacingAndGlyphs">95</text>
<text x="1326.81" y="191.7" font-family="Liberation Sans" font-size="12.5" font-weight="bold" fill="#000" textLength="13.69" lengthAdjust="spacingAndGlyphs">-9</text>
<text x="1459.92" y="191.7" font-family="Liberation Sans" font-size="12.5" font-weight="bold" fill="#000" textLength="22.57" lengthAdjust="spacingAndGlyphs">-22</text>
<text x="65.00" y="210" font-family="Liberation Sans" font-size="13" fill="#000" textLength="158.80" lengthAdjust="spacingAndGlyphs">VIX APR 14 '20 57.5 Put</text>
<text x="316.83" y="210.8" font-family="Liberation Sans" font-size="13" fill="#000" textLength="12.67" lengthAdjust="spacingAndGlyphs">-5</text>
<text x="377.90" y="210.8" font-family="Liberation Sans" font-size="13" fill="#000" textLength="36.60" lengthAdjust="spacingAndGlyphs">16.30</text>
<text x="463.90" y="210.8" font-family="Liberation Sans" font-size="13" fill="#000" textLength="36.60" lengthAdjust="spacingAndGlyphs">16.70</text>
<text x="545.63" y="210.8" font-family="Liberation Sans" font-size="13" fill="#000" textLength="44.87" lengthAdjust="spacingAndGlyphs">10.453</text>
<text x="652.56" y="210.8" font-family="Liberation Sans" font-size="13" fill="#000" textLength="33.94" lengthAdjust="spacingAndGlyphs">-0.59</text>
<text x="748.16" y="210.8" font-family="Liberation Sans" font-size="13" fill="#000" textLength="28.34" lengthAdjust="spacingAndGlyphs">5.05</text>
<text x="842.29" y="210.8" font-family="Liberation Sans" font-size="13" fill="#000" textLength="42.21" lengthAdjust="spacingAndGlyphs">-2,294</text>
<text x="956.29" y="210.8" font-family="Liberation Sans" font-size="13" fill="#000" textLength="42.21" lengthAdjust="spacingAndGlyphs">-2,905</text>
<text x="1083.90" y="210.8" font-family="Liberation Sans" font-size="13" fill="#000" textLength="23.60" lengthAdjust="spacingAndGlyphs">295</text>
<text x="1216.16" y="210.8" font-family="Liberation Sans" font-size="13" fill="#000" textLength="15.34" lengthAdjust="spacingAndGlyphs">95</text>
<text x="1327.83" y="210.8" font-family="Liberation Sans" font-size="13" fill="#000" textLength="12.67" lengthAdjust="spacingAndGlyphs">-9</text>
<text x="1461.56" y="210.8" font-family="Liberation Sans" font-size="13" fill="#000" textLength="20.94" lengthAdjust="spacingAndGlyphs">-22</text>
<text x="1552.91" y="210.8" font-family="Liberation Sans" font-size="13" fill="#000" textLength="50.59" lengthAdjust="spacingAndGlyphs">12.26%</text>
<text x="1713.18" y="210.8" font-family="Liberation Sans" font-size="13" fill="#000" textLength="42.32" lengthAdjust="spacingAndGlyphs">0.47%</text>
<text x="35.60" y="229" font-family="Liberation Sans" font-size="12.5" font-weight="bold" fill="#000" textLength="84.70" lengthAdjust="spacingAndGlyphs">2020-09-15</text>
<text x="959.64" y="229.7" font-family="Liberation Sans" font-size="12.5" font-weight="bold" fill="#000" textLength="38.86" lengthAdjust="spacingAndGlyphs">2,014</text>
<text x="1076.04" y="229.7" font-family="Liberation Sans" font-size="12.5" font-weight="bold" fill="#000" textLength="31.46" lengthAdjust="spacingAndGlyphs">-575</text>
<text x="1217.81" y="229.7" font-family="Liberation Sans" font-size="12.5" font-weight="bold" fill="#000" textLength="13.69" lengthAdjust="spacingAndGlyphs">-9</text>
<text x="1332.81" y="229.7" font-family="Liberation Sans" font-size="12.5" font-weight="bold" fill="#000" textLength="7.69" lengthAdjust="spacingAndGlyphs">9</text>
<text x="1465.92" y="229.7" font-family="Liberation Sans" font-size="12.5" font-weight="bold" fill="#000" textLength="16.57" lengthAdjust="spacingAndGlyphs">35</text>
<text x="65.00" y="248" font-family="Liberation Sans" font-size="13" fill="#000" textLength="146.60" lengthAdjust="spacingAndGlyphs">VIX SEP 15 '20 70 Put</text>
<text x="322.43" y="248.8" font-family="Liberation Sans" font-size="13" fill="#000" textLength="7.07" lengthAdjust="spacingAndGlyphs">7</text>
<text x="377.90" y="248.8" font-family="Liberation Sans" font-size="13" fill="#000" textLength="36.60" lengthAdjust="spacingAndGlyphs">43.60</text>
<text x="463.90" y="248.8" font-family="Liberation Sans" font-size="13" fill="#000" textLength="36.60" lengthAdjust="spacingAndGlyphs">43.20</text>
<text x="545.63" y="248.8" font-family="Liberation Sans" font-size="13" fill="#000" textLength="44.87" lengthAdjust="spacingAndGlyphs">40.760</text>
<text x="652.56" y="248.8" font-family="Liberation Sans" font-size="13" fill="#000" textLength="33.94" lengthAdjust="spacingAndGlyphs">-0.82</text>
<text x="748.16" y="248.8" font-family="Liberation Sans" font-size="13" fill="#000" textLength="28.34" lengthAdjust="spacingAndGlyphs">1.38</text>
<text x="847.90" y="248.8" font-family="Liberation Sans" font-size="13" fill="#000" textLength="36.60" lengthAdjust="spacingAndGlyphs">1,240</text>
<text x="961.90" y="248.8" font-family="Liberation Sans" font-size="13" fill="#000" textLength="36.60" lengthAdjust="spacingAndGlyphs">2,014</text>
<text x="1078.29" y="248.8" font-family="Liberation Sans" font-size="13" fill="#000" textLength="29.21" lengthAdjust="spacingAndGlyphs">-575</text>
<text x="1218.83" y="248.8" font-family="Liberation Sans" font-size="13" fill="#000" textLength="12.67" lengthAdjust="spacingAndGlyphs">-9</text>
<text x="1333.43" y="248.8" font-family="Liberation Sans" font-size="13" fill="#000" textLength="7.07" lengthAdjust="spacingAndGlyphs">9</text>
<text x="1467.16" y="248.8" font-family="Liberation Sans" font-size="13" fill="#000" textLength="15.34" lengthAdjust="spacingAndGlyphs">35</text>
<text x="1561.18" y="248.8" font-family="Liberation Sans" font-size="13" fill="#000" textLength="42.32" lengthAdjust="spacingAndGlyphs">6.44%</text>
<text x="1707.57" y="248.8" font-family="Liberation Sans" font-size="13" fill="#000" textLength="47.93" lengthAdjust="spacingAndGlyphs">-2.19%</text>
<text x="112.00" y="267" font-family="Liberation Sans" font-size="13" fill="#fff" textLength="29.00" lengthAdjust="spacingAndGlyphs">NEW</text>
<text x="10.20" y="548.5" font-family="Liberation Sans" font-size="11" fill="#fff" textLength="35.60" lengthAdjust="spacingAndGlyphs">Range</text>
<text x="95.50" y="548.5" font-family="Liberation Sans" font-size="11" fill="#fff" textLength="39.60" lengthAdjust="spacingAndGlyphs">Update</text>
<text x="1241.20" y="550" font-family="Liberation Sans" font-size="11" fill="#fff" textLength="32.80" lengthAdjust="spacingAndGlyphs">Zoom</text>
<text x="70.16" y="1082" font-family="Liberation Sans" font-size="12" fill="#111" textLength="6.67" lengthAdjust="spacingAndGlyphs">5</text>
<text x="125.68" y="1082" font-family="Liberation Sans" font-size="12" fill="#111" textLength="13.94" lengthAdjust="spacingAndGlyphs">10</text>
<text x="184.83" y="1082" font-family="Liberation Sans" font-size="12" fill="#111" textLength="13.94" lengthAdjust="spacingAndGlyphs">15</text>
<text x="243.98" y="1082" font-family="Liberation Sans" font-size="12" fill="#111" textLength="13.94" lengthAdjust="spacingAndGlyphs">20</text>
<text x="303.13" y="1082" font-family="Liberation Sans" font-size="12" fill="#111" textLength="13.94" lengthAdjust="spacingAndGlyphs">25</text>
<text x="362.28" y="1082" font-family="Liberation Sans" font-size="12" fill="#111" textLength="13.94" lengthAdjust="spacingAndGlyphs">30</text>
<text x="421.43" y="1082" font-family="Liberation Sans" font-size="12" fill="#111" textLength="13.94" lengthAdjust="spacingAndGlyphs">35</text>
<text x="480.58" y="1082" font-family="Liberation Sans" font-size="12" fill="#111" textLength="13.94" lengthAdjust="spacingAndGlyphs">40</text>
<text x="539.73" y="1082" font-family="Liberation Sans" font-size="12" fill="#111" textLength="13.94" lengthAdjust="spacingAndGlyphs">45</text>
<text x="598.88" y="1082" font-family="Liberation Sans" font-size="12" fill="#111" textLength="13.94" lengthAdjust="spacingAndGlyphs">50</text>
<text x="658.03" y="1082" font-family="Liberation Sans" font-size="12" fill="#111" textLength="13.94" lengthAdjust="spacingAndGlyphs">55</text>
<text x="717.18" y="1082" font-family="Liberation Sans" font-size="12" fill="#111" textLength="13.94" lengthAdjust="spacingAndGlyphs">60</text>
<text x="776.33" y="1082" font-family="Liberation Sans" font-size="12" fill="#111" textLength="13.94" lengthAdjust="spacingAndGlyphs">65</text>
<text x="835.48" y="1082" font-family="Liberation Sans" font-size="12" fill="#111" textLength="13.94" lengthAdjust="spacingAndGlyphs">70</text>
<text x="894.63" y="1082" font-family="Liberation Sans" font-size="12" fill="#111" textLength="13.94" lengthAdjust="spacingAndGlyphs">75</text>
<text x="953.78" y="1082" font-family="Liberation Sans" font-size="12" fill="#111" textLength="13.94" lengthAdjust="spacingAndGlyphs">80</text>
<text x="1012.93" y="1082" font-family="Liberation Sans" font-size="12" fill="#111" textLength="13.94" lengthAdjust="spacingAndGlyphs">85</text>
<text x="1072.08" y="1082" font-family="Liberation Sans" font-size="12" fill="#111" textLength="13.94" lengthAdjust="spacingAndGlyphs">90</text>
<text x="1131.23" y="1082" font-family="Liberation Sans" font-size="12" fill="#111" textLength="13.94" lengthAdjust="spacingAndGlyphs">95</text>
<text x="1186.74" y="1082" font-family="Liberation Sans" font-size="12" fill="#111" textLength="21.22" lengthAdjust="spacingAndGlyphs">100</text>
<text x="1245.89" y="1082" font-family="Liberation Sans" font-size="12" fill="#111" textLength="21.22" lengthAdjust="spacingAndGlyphs">105</text>
<text x="24.98" y="1051.0" font-family="Liberation Sans" font-size="12" fill="#111" textLength="36.52" lengthAdjust="spacingAndGlyphs">-8,000</text>
<text x="24.98" y="1022.0" font-family="Liberation Sans" font-size="12" fill="#111" textLength="36.52" lengthAdjust="spacingAndGlyphs">-7,000</text>
<text x="24.98" y="993.0" font-family="Liberation Sans" font-size="12" fill="#111" textLength="36.52" lengthAdjust="spacingAndGlyphs">-6,000</text>
<text x="24.98" y="964.0" font-family="Liberation Sans" font-size="12" fill="#111" textLength="36.52" lengthAdjust="spacingAndGlyphs">-5,000</text>
<text x="24.98" y="935.0" font-family="Liberation Sans" font-size="12" fill="#111" textLength="36.52" lengthAdjust="spacingAndGlyphs">-4,000</text>
<text x="24.98" y="906.0" font-family="Liberation Sans" font-size="12" fill="#111" textLength="36.52" lengthAdjust="spacingAndGlyphs">-3,000</text>
<text x="24.98" y="877.0" font-family="Liberation Sans" font-size="12" fill="#111" textLength="36.52" lengthAdjust="spacingAndGlyphs">-2,000</text>
<text x="24.98" y="848.0" font-family="Liberation Sans" font-size="12" fill="#111" textLength="36.52" lengthAdjust="spacingAndGlyphs">-1,000</text>
<text x="54.83" y="819.0" font-family="Liberation Sans" font-size="12" fill="#111" textLength="6.67" lengthAdjust="spacingAndGlyphs">0</text>
<text x="29.48" y="790.0" font-family="Liberation Sans" font-size="12" fill="#111" textLength="32.02" lengthAdjust="spacingAndGlyphs">1,000</text>
<text x="29.48" y="761.0" font-family="Liberation Sans" font-size="12" fill="#111" textLength="32.02" lengthAdjust="spacingAndGlyphs">2,000</text>
<text x="29.48" y="732.0" font-family="Liberation Sans" font-size="12" fill="#111" textLength="32.02" lengthAdjust="spacingAndGlyphs">3,000</text>
<text x="29.48" y="703.0" font-family="Liberation Sans" font-size="12" fill="#111" textLength="32.02" lengthAdjust="spacingAndGlyphs">4,000</text>
<text x="29.48" y="674.0" font-family="Liberation Sans" font-size="12" fill="#111" textLength="32.02" lengthAdjust="spacingAndGlyphs">5,000</text>
<text x="29.48" y="645.0" font-family="Liberation Sans" font-size="12" fill="#111" textLength="32.02" lengthAdjust="spacingAndGlyphs">6,000</text>
<text x="29.48" y="616.0" font-family="Liberation Sans" font-size="12" fill="#111" textLength="32.02" lengthAdjust="spacingAndGlyphs">7,000</text>
<text x="29.48" y="587.0" font-family="Liberation Sans" font-size="12" fill="#111" textLength="32.02" lengthAdjust="spacingAndGlyphs">8,000</text>
<text x="1079.00" y="923" font-family="Liberation Serif" font-size="11" font-weight="bold" fill="#5b8fff" textLength="62.00" lengthAdjust="spacingAndGlyphs">20200414</text>
<text x="1203.30" y="937.2" font-family="Liberation Serif" font-size="11" font-weight="bold" fill="#9900ff" textLength="33.70" lengthAdjust="spacingAndGlyphs">10:44</text>
<text transform="translate(12.5,822) rotate(-90)" font-family="Liberation Sans" font-size="12" fill="#111" text-anchor="middle" letter-spacing="0.371">Volatility Products Portfolio Value Change (USD)</text>
<text x="553.40" y="1100" font-family="Liberation Sans" font-size="12" fill="#111" textLength="164.60" lengthAdjust="spacingAndGlyphs">Underlying Price - VIX (USD)</text>
<text x="539.00" y="1120" font-family="Liberation Sans" font-size="13" font-weight="bold" fill="#fff" textLength="205.40" lengthAdjust="spacingAndGlyphs">Date Scenario Date Scenario</text>
<text x="1295.00" y="554" font-family="Liberation Sans" font-size="13" fill="#f4f4f4" textLength="48.00" lengthAdjust="spacingAndGlyphs">Report:</text>
<text x="1419.80" y="554" font-family="Liberation Sans" font-size="13" fill="#000" textLength="119.20" lengthAdjust="spacingAndGlyphs">Risk by Underlying</text>
<text x="1295.00" y="577" font-family="Liberation Sans" font-size="13" fill="#f4f4f4" textLength="30.00" lengthAdjust="spacingAndGlyphs">Plot:</text>
<text x="1419.80" y="577" font-family="Liberation Sans" font-size="13" fill="#000" textLength="274.80" lengthAdjust="spacingAndGlyphs">Volatility Products Portfolio Value Change</text>
<text x="1295.00" y="600" font-family="Liberation Sans" font-size="13" fill="#f4f4f4" textLength="72.90" lengthAdjust="spacingAndGlyphs">Underlying:</text>
<text x="1422.20" y="599" font-family="Liberation Mono" font-size="12.5" fill="#111" textLength="23.60" lengthAdjust="spacingAndGlyphs">VIX</text>
<text x="1295.00" y="623" font-family="Liberation Sans" font-size="13" fill="#f4f4f4" textLength="65.10" lengthAdjust="spacingAndGlyphs">Category:</text>
<text x="1419.80" y="623" font-family="Liberation Sans" font-size="13" fill="#000" textLength="41.10" lengthAdjust="spacingAndGlyphs">Equity</text>
<text x="1295.00" y="646" font-family="Liberation Sans" font-size="13" fill="#f4f4f4" textLength="63.70" lengthAdjust="spacingAndGlyphs">Currency:</text>
<text x="1419.80" y="646" font-family="Liberation Sans" font-size="13" fill="#000" textLength="89.10" lengthAdjust="spacingAndGlyphs">All Currencies</text>
<text x="1295.00" y="669" font-family="Liberation Sans" font-size="13" fill="#f4f4f4" textLength="116.90" lengthAdjust="spacingAndGlyphs">Last Trading Day:</text>
<text x="1419.80" y="669" font-family="Liberation Sans" font-size="13" fill="#000" textLength="44.30" lengthAdjust="spacingAndGlyphs">TOTAL</text>
<text x="1295.00" y="694" font-family="Liberation Sans" font-size="13" fill="#f4f4f4" textLength="28.00" lengthAdjust="spacingAndGlyphs">Drill:</text>
<text x="1309.40" y="716.3" font-family="Liberation Sans" font-size="13" fill="#f4f4f4" textLength="342.00" lengthAdjust="spacingAndGlyphs">Slicer: [ [Underlying]=VIX ; [ProductType]=Equity ]</text></svg>
<div class="a" style="left:1034px;top:17px;width:676px;height:4px;background:#fff"></div>
<div class="a" style="left:0;top:0;width:1911px;height:1px;background:#f00"></div>
<div class="a" style="left:0;top:0;width:1px;height:1118px;background:#f00"></div>
<div class="a" style="left:1909px;top:0;width:2px;height:1118px;background:#f00"></div>
<div class="a" style="left:1911px;top:0;width:2px;height:1118px;background:#000"></div>
<div class="a" style="left:1913px;top:0;width:2px;height:1118px;background:#9a9a9a"></div>
</body></html>
